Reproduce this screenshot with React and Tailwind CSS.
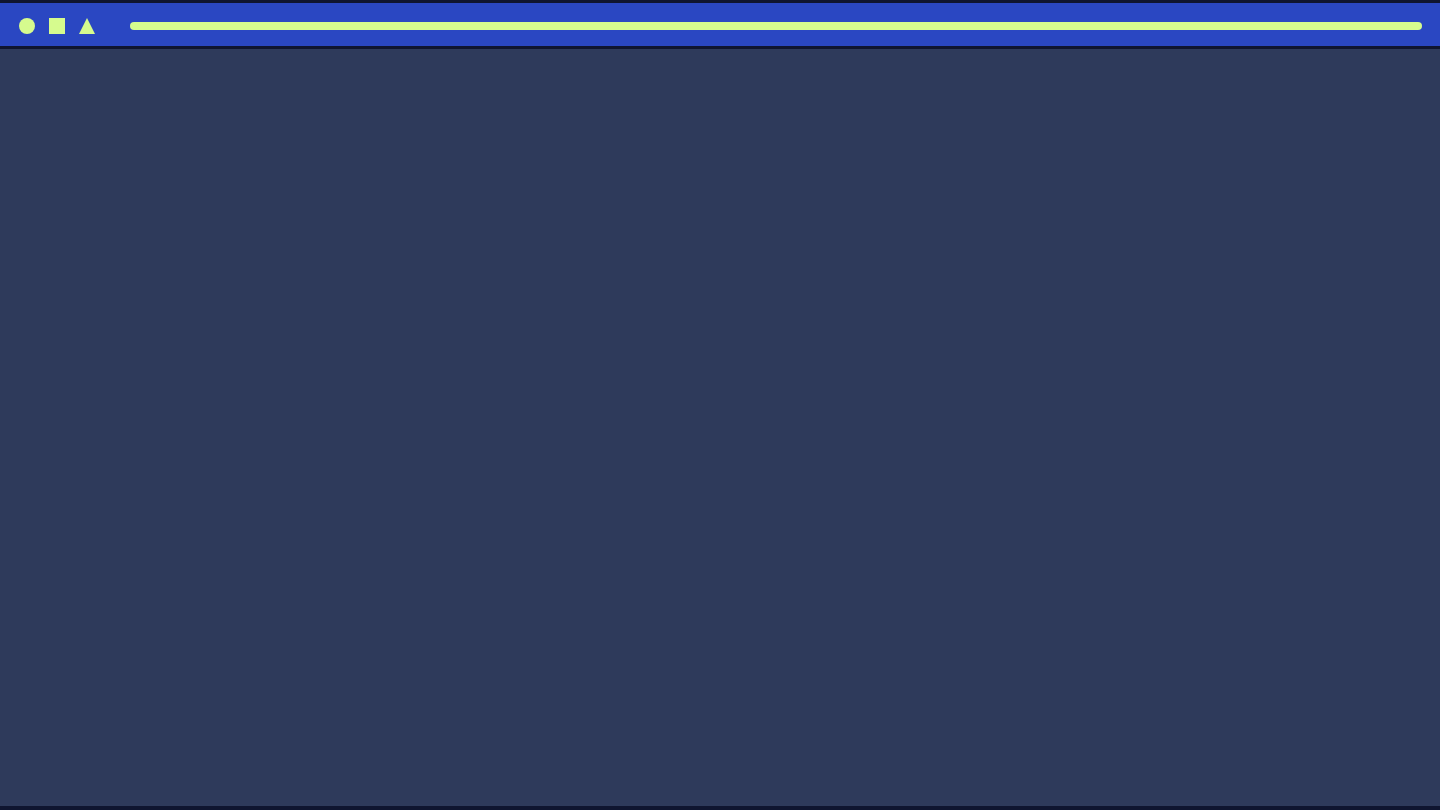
import React from "react";

function Shapes() {
  return (
    <div className="flex items-center gap-[14px]">
      <div className="w-4 h-4 rounded-full bg-[#d6fb8e]" />
      <div className="w-4 h-4 bg-[#d6fb8e]" />
      <svg width="16" height="16" viewBox="0 0 16 16" className="block">
        <polygon points="8,0 16,16 0,16" fill="#d6fb8e" />
      </svg>
    </div>
  );
}

export default function App() {
  return (
    <div className="w-[1440px] h-[810px] flex flex-col bg-[#0f1530] pt-[3px] pb-[4px] overflow-hidden">
      <div className="h-[43px] flex items-center bg-[#2a47c2] pl-[19px] pr-[18px] pt-[3px]">
        <Shapes />
        <div className="flex-1 ml-[35px] h-2 rounded-full bg-[#d6fb8e]" />
      </div>
      <div className="h-[3px] bg-[#0f1530]" />
      <div className="flex-1 bg-[#2e3a5b]" />
    </div>
  );
}
